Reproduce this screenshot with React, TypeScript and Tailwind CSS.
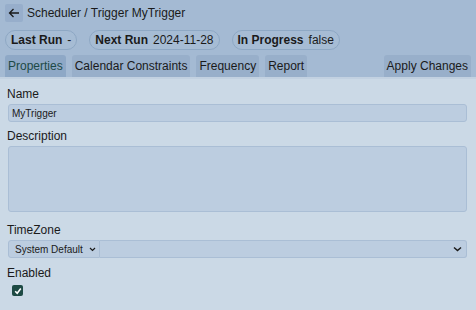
import React from "react";

function Pill({ label, value }: { label: string; value: string }) {
  return (
    <div className="flex items-center gap-[5px] h-[20px] px-[5px] rounded-full border border-[#8ea8c4] bg-[#a6bcd4] text-[12px] leading-none">
      <span className="font-bold text-[#1a1a1a]">{label}</span>
      <span className="text-[#1a1a1a]">{value}</span>
    </div>
  );
}

function Tab({ label, active }: { label: string; active?: boolean }) {
  return (
    <div
      className={
        "h-[22px] px-[3px] flex items-center rounded-t-[3px] text-[12px] whitespace-nowrap " +
        (active ? "bg-[#8ea8c6] text-[#1d4a47]" : "bg-[#98afca] text-[#1a1a1a]")
      }
    >
      {label}
    </div>
  );
}

export default function App() {
  return (
    <div
      className="w-[476px] h-[310px] bg-[#cbd9e6] text-[#1a1a1a] overflow-hidden"
      style={{ fontFamily: '"Liberation Sans", Arial, sans-serif' }}
    >
      <div className="bg-[#a4bad3] px-[5px] pt-[4px]">
        <div className="flex items-center gap-[4px] h-[18px]">
          <div className="w-[18px] h-[18px] bg-[#97aecb] rounded-[2px] flex items-center justify-center">
            <svg width="12" height="12" viewBox="0 0 12 12" fill="none" stroke="#1a1a1a" strokeWidth="1.3">
              <path d="M11 6H1.5M5.5 2L1.5 6L5.5 10" />
            </svg>
          </div>
          <span className="text-[12px]">Scheduler / Trigger MyTrigger</span>
        </div>
        <div className="flex items-center gap-[12px] mt-[8px]">
          <Pill label="Last Run" value="-" />
          <Pill label="Next Run" value="2024-11-28" />
          <Pill label="In Progress" value="false" />
        </div>
        <div className="flex items-end gap-[6px] mt-[5px]">
          <Tab label="Properties" active />
          <Tab label="Calendar Constraints" />
          <Tab label="Frequency" />
          <Tab label="Report" />
          <div className="ml-auto">
            <Tab label="Apply Changes" />
          </div>
        </div>
      </div>
      <div className="h-[2px] bg-[#c2d1e1]" />
      <div className="px-[7px] pt-[7px] text-[12px]">
        <div className="leading-[16px]">Name</div>
        <div className="mt-[2px] ml-[1px] mr-[2px] h-[18px] bg-[#bccde0] border border-[#aabed5] rounded-[3px] px-[3px] flex items-center text-[10px]">
          MyTrigger
        </div>
        <div className="mt-[6px] leading-[16px]">Description</div>
        <div className="mt-[2px] ml-[1px] mr-[2px] h-[66px] bg-[#bccde0] border border-[#aabed5] rounded-[3px]" />
        <div className="mt-[10px] leading-[16px]">TimeZone</div>
        <div className="mt-[2px] ml-[1px] mr-[2px] flex h-[18px]">
          <div className="w-[92px] shrink-0 whitespace-nowrap bg-[#bccde0] border border-[#aabed5] rounded-l-[3px] flex items-center pl-[6px] text-[10px]">
            <span>System Default</span>
            <svg className="ml-[6px]" width="7" height="5" viewBox="0 0 7 5" fill="none" stroke="#1a1a1a" strokeWidth="1.2">
              <path d="M1 1L3.5 3.5L6 1" />
            </svg>
          </div>
          <div className="flex-1 bg-[#bccde0] border border-l-0 border-[#aabed5] rounded-r-[3px] flex items-center justify-end pr-[4px]">
            <svg width="9" height="6" viewBox="0 0 9 6" fill="none" stroke="#1a1a1a" strokeWidth="1.5">
              <path d="M1 1.5L4.5 4.5L8 1.5" />
            </svg>
          </div>
        </div>
        <div className="mt-[7px] leading-[16px]">Enabled</div>
        <div className="mt-[4px] ml-[5px] w-[11px] h-[11px] bg-[#1d4a44] rounded-[2px] flex items-center justify-center">
          <svg width="8" height="8" viewBox="0 0 8 8" fill="none" stroke="#ffffff" strokeWidth="1.6">
            <path d="M1.2 4.2L3.2 6.2L6.8 1.6" />
          </svg>
        </div>
      </div>
    </div>
  );
}
